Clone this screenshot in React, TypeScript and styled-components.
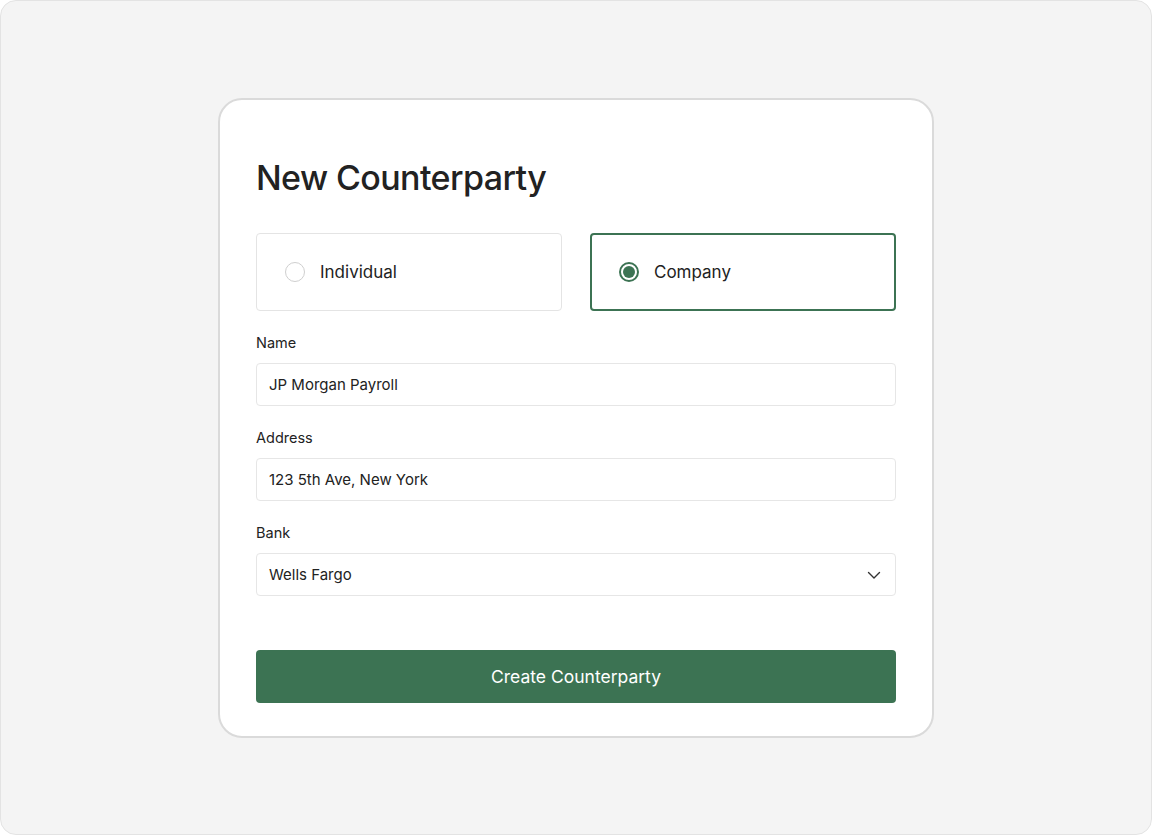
import React, { useState } from 'react'
import styled, { createGlobalStyle } from 'styled-components';

const GlobalStyle = createGlobalStyle`
   html, body {
      margin: 0;
      padding: 0;
      background: #ffffff;
   }

   * {
      box-sizing: border-box;
   }

   body {
      font-family: Inter, "Liberation Sans", sans-serif;
      color: #222222;
      -webkit-font-smoothing: antialiased;
   }
`;

const Frame = styled.div`
   width: 1152px;
   height: 835px;
   background: #f4f4f4;
   border: 1px solid #e3e3e3;
   border-radius: 16px;
   display: flex;
   align-items: center;
   justify-content: center;
   padding-top: 1px;
`;

const Card = styled.form`
   width: 716px;
   background: #ffffff;
   border: 2px solid #dadada;
   border-radius: 24px;
   padding: 58px 36px 33px;
   display: flex;
   flex-direction: column;
`;

const Title = styled.h1`
   margin: 0 0 35px;
   font-size: 34px;
   line-height: 40px;
   font-weight: 500;
   letter-spacing: -0.6px;
   color: #222222;
`;

const TypeRow = styled.div`
   display: grid;
   grid-template-columns: 1fr 1fr;
   gap: 28px;
   margin-bottom: 22px;
`;

const TypeOption = styled.label<{ $active: boolean }>`
   height: 78px;
   display: flex;
   align-items: center;
   gap: 15px;
   padding: 0 ${(p) => (p.$active ? 27 : 28)}px;
   border: ${(p) => (p.$active ? '2px solid #3c7353' : '1px solid #e4e4e4')};
   border-radius: 4px;
   cursor: pointer;
   font-size: 17px;
   color: #222222;
`;

const RadioDot = styled.span<{ $active: boolean }>`
   width: 20px;
   height: 20px;
   flex-shrink: 0;
   border-radius: 50%;
   border: ${(p) => (p.$active ? '2px solid #3c7353' : '1px solid #cfcfcf')};
   background: #ffffff;
   display: flex;
   align-items: center;
   justify-content: center;

   &::after {
      content: '';
      width: 12px;
      height: 12px;
      border-radius: 50%;
      background: #3c7353;
      display: ${(p) => (p.$active ? 'block' : 'none')};
   }
`;

const Field = styled.div`
   display: flex;
   flex-direction: column;
   margin-bottom: 22px;
`;

const Label = styled.span`
   font-size: 14.5px;
   line-height: 20px;
   margin-bottom: 10px;
   color: #222222;
`;

const Input = styled.div`
   height: 43px;
   border: 1px solid #e6e6e6;
   border-radius: 4px;
   padding: 0 12px;
   display: flex;
   align-items: center;
   justify-content: space-between;
   font-size: 15px;
   color: #222222;
`;

const SubmitButton = styled.button`
   margin-top: 32px;
   height: 53px;
   border: none;
   border-radius: 4px;
   background: #3c7353;
   color: #ffffff;
   font-family: Inter, "Liberation Sans", sans-serif;
   font-size: 17.5px;
   font-weight: 400;
   cursor: pointer;
`;

function Chevron() {
   return (
      <svg width="16" height="16" viewBox="0 0 16 16" fill="none" style={{ marginRight: 1 }}>
         <path d="M2.5 5.5 L8 11 L13.5 5.5" stroke="#333333" strokeWidth="1.4" strokeLinecap="round" strokeLinejoin="round" />
      </svg>
   );
}

export default function App() {
   const [kind, setKind] = useState<'individual' | 'company'>('company');

   const fields = [
      { label: 'Name', value: 'JP Morgan Payroll' },
      { label: 'Address', value: '123 5th Ave, New York' },
   ];

   return (
      <>
         <GlobalStyle />
         <Frame>
            <Card onSubmit={(e) => e.preventDefault()}>
               <Title>New Counterparty</Title>
               <TypeRow>
                  <TypeOption $active={kind === 'individual'} onClick={() => setKind('individual')}>
                     <RadioDot $active={kind === 'individual'} />
                     Individual
                  </TypeOption>
                  <TypeOption $active={kind === 'company'} onClick={() => setKind('company')}>
                     <RadioDot $active={kind === 'company'} />
                     Company
                  </TypeOption>
               </TypeRow>
               {fields.map((f) => (
                  <Field key={f.label}>
                     <Label>{f.label}</Label>
                     <Input>{f.value}</Input>
                  </Field>
               ))}
               <Field>
                  <Label>Bank</Label>
                  <Input>
                     Wells Fargo
                     <Chevron />
                  </Input>
               </Field>
               <SubmitButton type="submit">Create Counterparty</SubmitButton>
            </Card>
         </Frame>
      </>
   );
}
